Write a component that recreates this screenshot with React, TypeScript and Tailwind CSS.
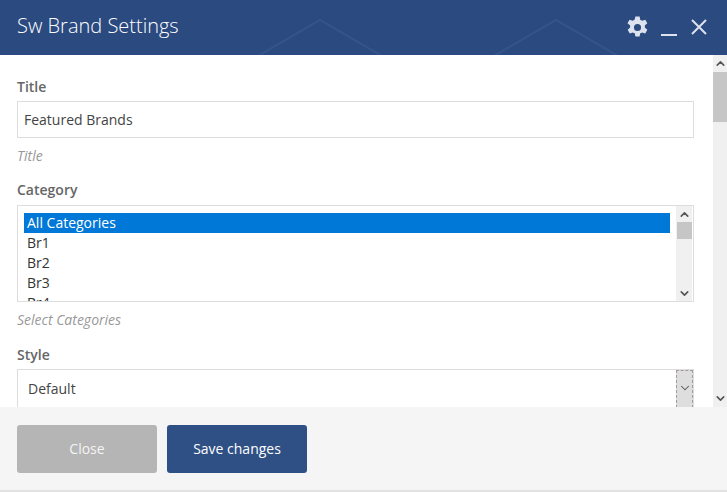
import React from 'react';
import { ChevronDown, ChevronUp } from 'lucide-react';

const font = "font-['Open_Sans','Noto_Sans',sans-serif]";

function Gear() {
  return (
    <svg width="23" height="23" viewBox="1.5 1 21 22" fill="#dce2ee">
      <path
        fillRule="evenodd"
        d="M10 1.5h4l.6 3.1c.6.2 1.2.5 1.8.9l3-1 2 3.5-2.4 2.1c.1.7.1 1.3 0 2l2.4 2.1-2 3.5-3-1c-.6.4-1.2.7-1.8.9l-.6 3.1h-4l-.6-3.1c-.6-.2-1.2-.5-1.8-.9l-3 1-2-3.5 2.4-2.1c-.1-.7-.1-1.3 0-2L2.4 8l2-3.5 3 1c.6-.4 1.2-.7 1.8-.9L10 1.5zM12 8.6a3.4 3.4 0 100 6.8 3.4 3.4 0 000-6.8z"
      />
    </svg>
  );
}

function Header() {
  return (
    <div className="relative h-[55px] shrink-0 bg-[#2b4a7f] overflow-hidden flex items-center justify-between pl-[17px] pr-[19px]">
      {/* faint roof shapes behind the title bar */}
      <svg className="absolute left-0 top-0" width="727" height="55" fill="none" stroke="#35558a" strokeWidth="2">
        <path d="M258 56 L320 20 L382 56" />
        <path d="M494 56 L556 20 L618 56" />
      </svg>
      <span className="relative text-[20px] font-light leading-none text-white mt-[-4px]">Sw Brand Settings</span>
      <div className="relative flex items-center mt-[-1px]">
        <Gear />
        <div className="w-[16px] h-[2px] bg-[#dce2ee] ml-[12px] mt-[15px]" />
        <svg className="ml-[13px]" width="18" height="18" viewBox="0 0 18 18" stroke="#dce2ee" strokeWidth="2">
          <path d="M2 2 L16 16 M16 2 L2 16" />
        </svg>
      </div>
    </div>
  );
}

function Label({ children }: { children: React.ReactNode }) {
  return <div className="text-[14px] leading-[20px] font-semibold text-[#666]">{children}</div>;
}

function Hint({ children }: { children: React.ReactNode }) {
  return <div className="text-[14px] leading-[18px] italic text-[#999]">{children}</div>;
}

function CategoryList() {
  return (
    <div className="mt-[5px] h-[97px] border border-[#ddd] bg-white flex overflow-hidden">
      <div className="flex-1 min-w-0 pl-[6px] pr-[6px] pt-[7px] text-[14px] leading-[20px] text-[#333]">
        <div className="bg-[#0078d7] text-white pl-[3px]">All Categories</div>
        <div className="pl-[3px]">Br1</div>
        <div className="pl-[3px]">Br2</div>
        <div className="pl-[3px]">Br3</div>
        <div className="pl-[3px]">Br4</div>
      </div>
      <div className="w-[16px] mr-px shrink-0 bg-[#f0f0f0] flex flex-col items-center">
        <ChevronUp size={13} strokeWidth={3} className="text-[#555] mt-[2px] shrink-0" />
        <div className="w-[15px] h-[17px] bg-[#c6c6c6] mt-[1px]" />
        <ChevronDown size={13} strokeWidth={3} className="text-[#555] mt-auto mb-[1px] shrink-0" />
      </div>
    </div>
  );
}

function Body() {
  return (
    <div className="flex-1 min-h-0 flex overflow-hidden bg-white">
      <div className="flex-1 min-w-0 pl-[17px] pr-[19px] pt-[22px]">
        <Label>Title</Label>
        <div className="mt-[4px] h-[37px] border border-[#ddd] flex items-center px-[6px] text-[14px] text-[#444]">
          Featured Brands
        </div>
        <div className="mt-[9px]"><Hint>Title</Hint></div>
        <div className="mt-[15px]"><Label>Category</Label></div>
        <CategoryList />
        <div className="mt-[9px]"><Hint>Select Categories</Hint></div>
        <div className="mt-[16px]"><Label>Style</Label></div>
        {/* taller than the visible part: the footer cuts its bottom edge off */}
        <div className="mt-[4px] h-[40px] border border-[#ddd] flex items-center justify-between pl-[10px] text-[14px] text-[#444]">
          <span className="mb-[2px]">Default</span>
          <div className="w-[17px] h-full bg-[#dedede] border border-dashed border-[#a39aa3] flex items-center justify-center">
            <ChevronDown size={14} strokeWidth={1.75} className="text-[#555] mb-[3px]" />
          </div>
        </div>
      </div>
      <div className="w-[14px] shrink-0 bg-[#f0f0f0] flex flex-col items-center">
        <ChevronUp size={13} strokeWidth={3} className="text-[#555] mt-[2px] shrink-0" />
        <div className="w-full h-[50px] bg-[#c6c6c6] mt-[2px]" />
        <ChevronDown size={13} strokeWidth={3} className="text-[#555] mt-auto mb-[2px] shrink-0" />
      </div>
    </div>
  );
}

function Footer() {
  return (
    <div className="h-[85px] shrink-0 bg-[#f5f5f5] border-b-2 border-[#e2e2e2] px-[17px] pt-[18px] flex gap-[10px] items-start">
      <button className="w-[140px] h-[48px] pb-[2px] rounded-[3px] bg-[#b5b5b5] text-[14px] text-[#f4f4f4]">Close</button>
      <button className="w-[140px] h-[48px] pb-[2px] rounded-[3px] bg-[#2f5085] text-[14px] text-white">Save changes</button>
    </div>
  );
}

export default function App() {
  return (
    <div className={`h-[492px] w-[727px] flex flex-col overflow-hidden ${font}`}>
      <Header />
      <Body />
      <Footer />
    </div>
  );
}
